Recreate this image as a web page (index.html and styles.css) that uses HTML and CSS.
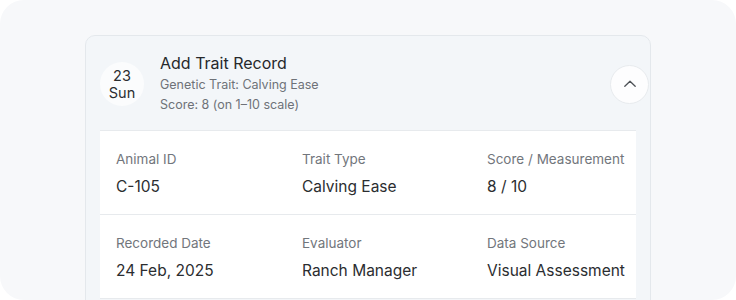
FILE: index.html
```html
<!DOCTYPE html>
<html lang="en">
<head>
    <meta charset="UTF-8">
    <meta name="viewport" content="width=device-width, initial-scale=1.0">
    <title>Trait Record</title>
    <link rel="stylesheet" href="styles.css">
</head>
<body>

<div class="panel">
    <!-- Trait record card -->
    <div class="record">
        <div class="record-head">
            <div class="day">
                <span>23</span>
                <span>Sun</span>
            </div>
            <div class="summary">
                <h3>Add Trait Record</h3>
                <p>Genetic Trait: Calving Ease</p>
                <p>Score: 8 (on 1–10 scale)</p>
            </div>
            <button class="toggle" type="button" aria-label="Collapse">
                <svg width="16" height="16" viewBox="0 0 16 16" fill="none">
                    <path d="M2.8 10.2L8 5.2L13.2 10.2" stroke="#4f5358" stroke-width="1.3" stroke-linecap="round" stroke-linejoin="round"/>
                </svg>
            </button>
        </div>

        <div class="details">
            <div class="row">
                <div class="field">
                    <span class="label">Animal ID</span>
                    <span class="value">C-105</span>
                </div>
                <div class="field">
                    <span class="label">Trait Type</span>
                    <span class="value">Calving Ease</span>
                </div>
                <div class="field">
                    <span class="label">Score / Measurement</span>
                    <span class="value">8 / 10</span>
                </div>
            </div>
            <div class="row">
                <div class="field">
                    <span class="label">Recorded Date</span>
                    <span class="value">24 Feb, 2025</span>
                </div>
                <div class="field">
                    <span class="label">Evaluator</span>
                    <span class="value">Ranch Manager</span>
                </div>
                <div class="field">
                    <span class="label">Data Source</span>
                    <span class="value">Visual Assessment</span>
                </div>
            </div>
        </div>
    </div>
</div>

</body>
</html>
```

FILE: styles.css
```css
body {
    margin: 0;
    background: #ffffff;
    font-family: Inter, "Noto Sans", sans-serif;
    color: #2b2d30;
    overflow: hidden;
}

/* Outer grey panel */
.panel {
    box-sizing: border-box;
    background: #f7f8fa;
    border-radius: 24px;
    height: 300px;
    overflow: hidden;
    padding: 35px 85px 0;
}

/* Card */
.record {
    background: #f3f6f9;
    border: 1px solid #e4e8ec;
    border-radius: 10px;
    padding: 0 14px 14px;
}

.record-head {
    display: flex;
    align-items: center;
    height: 94px;
}

.day {
    width: 44px;
    height: 44px;
    border-radius: 50%;
    background: #fbfcfd;
    display: flex;
    flex-direction: column;
    align-items: center;
    justify-content: center;
    font-size: 14.5px;
    line-height: 17px;
    color: #2b2d30;
    margin-top: 1px;
}

.summary {
    flex: 1;
    margin-left: 16px;
    margin-top: 2px;
}

.summary h3 {
    margin: 0 0 1px;
    font-size: 16px;
    font-weight: 400;
    line-height: 21px;
    color: #26282b;
}

.summary p {
    margin: 0;
    font-size: 12.5px;
    line-height: 20px;
    color: #6e7278;
}

.toggle {
    width: 39px;
    height: 39px;
    border-radius: 50%;
    border: 1px solid #e8ebee;
    background: #fdfdfe;
    display: flex;
    align-items: center;
    justify-content: center;
    padding: 0;
    margin-right: -13px;
    margin-top: 2px;
}

/* Details table */
.details {
    background: #ffffff;
    border-top: 1px solid #e7eaed;
}

.row {
    display: grid;
    grid-template-columns: 186px 185px 1fr;
    padding: 0 0 0 16px;
    height: 83px;
    border-bottom: 1px solid #e7eaed;
    align-content: center;
}

.field {
    display: flex;
    flex-direction: column;
    gap: 9px;
    white-space: nowrap;
}

.label {
    font-size: 13.5px;
    line-height: 18px;
    color: #72767c;
}

.value {
    font-size: 15.5px;
    line-height: 19px;
    color: #2b2d30;
}
```
